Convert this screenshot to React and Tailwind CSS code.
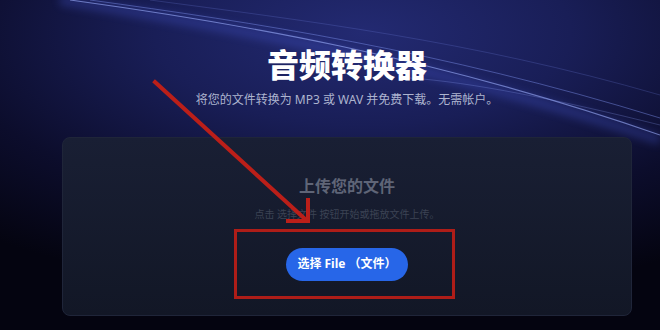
export default function App() {
  return (
    <div
      className="relative h-[330px] w-[660px] overflow-hidden bg-[radial-gradient(ellipse_90%_80%_at_55%_10%,#232a72_0%,#191e57_35%,#0c0d2c_70%,#040410_100%)]"
      style={{ fontFamily: '"Noto Sans", "Noto Sans CJK SC", sans-serif' }}
    >
      {/* light streaks */}
      <svg className="pointer-events-none absolute inset-0" width="660" height="330" viewBox="0 0 660 330">
        <defs>
          <filter id="glow" x="-20%" y="-20%" width="140%" height="140%">
            <feGaussianBlur stdDeviation="4" />
          </filter>
        </defs>
        <path d="M60 0 C 220 25, 420 60, 660 140" stroke="#4a5cd8" strokeWidth="10" fill="none" opacity="0.3" filter="url(#glow)" />
        <path d="M70 0 C 230 22, 430 55, 660 135" stroke="#9fb0ff" strokeWidth="1.1" fill="none" opacity="0.6" />
        <path d="M90 0 C 250 22, 440 50, 660 118" stroke="#7f93f0" strokeWidth="1" fill="none" opacity="0.45" />
        <path d="M150 0 C 300 20, 470 40, 660 95" stroke="#6f82e0" strokeWidth="0.8" fill="none" opacity="0.3" />
        <path d="M410 78 C 470 82, 560 100, 660 125" stroke="#8c9cf0" strokeWidth="0.8" fill="none" opacity="0.35" />
      </svg>

      <div className="relative flex flex-col items-center pl-[34px] pt-[46px]">
        <h1 className="text-[32px] font-black leading-[38px] text-white">音频转换器</h1>
        <p className="mt-[8px] text-[12px] leading-[16px] text-[#adb4cf]">
          将您的文件转换为 MP3 或 WAV 并免费下载。无需帐户。
        </p>
      </div>

      <div className="relative ml-[62px] mt-[29px] flex h-[179px] w-[570px] flex-col items-center rounded-[8px] border border-[#1f2539] bg-[linear-gradient(180deg,#191f34_0%,#121726_100%)] pt-[37px]">
        <h2 className="text-[16px] font-bold leading-[22px] text-[#5f6577]">上传您的文件</h2>
        <p className="mt-[10px] text-[10px] leading-[14px] text-[#3c4354]">
          点击 选择文件 按钮开始或拖放文件上传。
        </p>
        <div className="mr-[5px] mt-[8px] flex h-[70px] w-[221px] items-center justify-center border-[3px] border-[#ae1d18]">
          <button
            type="button"
            className="ml-[5px] h-[33px] w-[122px] rounded-full bg-[#2766e8] text-[12px] font-bold text-white"
          >
            选择 File （文件）
          </button>
        </div>
      </div>

      {/* annotation arrow */}
      <svg className="pointer-events-none absolute inset-0" width="660" height="330" viewBox="0 0 660 330">
        <g stroke="#bb1f19" strokeWidth="4" fill="none" strokeLinecap="square">
          <path d="M155 82 L306 220" />
          <path d="M308 200 L308 221 L288 221" />
        </g>
      </svg>
    </div>
  );
}
